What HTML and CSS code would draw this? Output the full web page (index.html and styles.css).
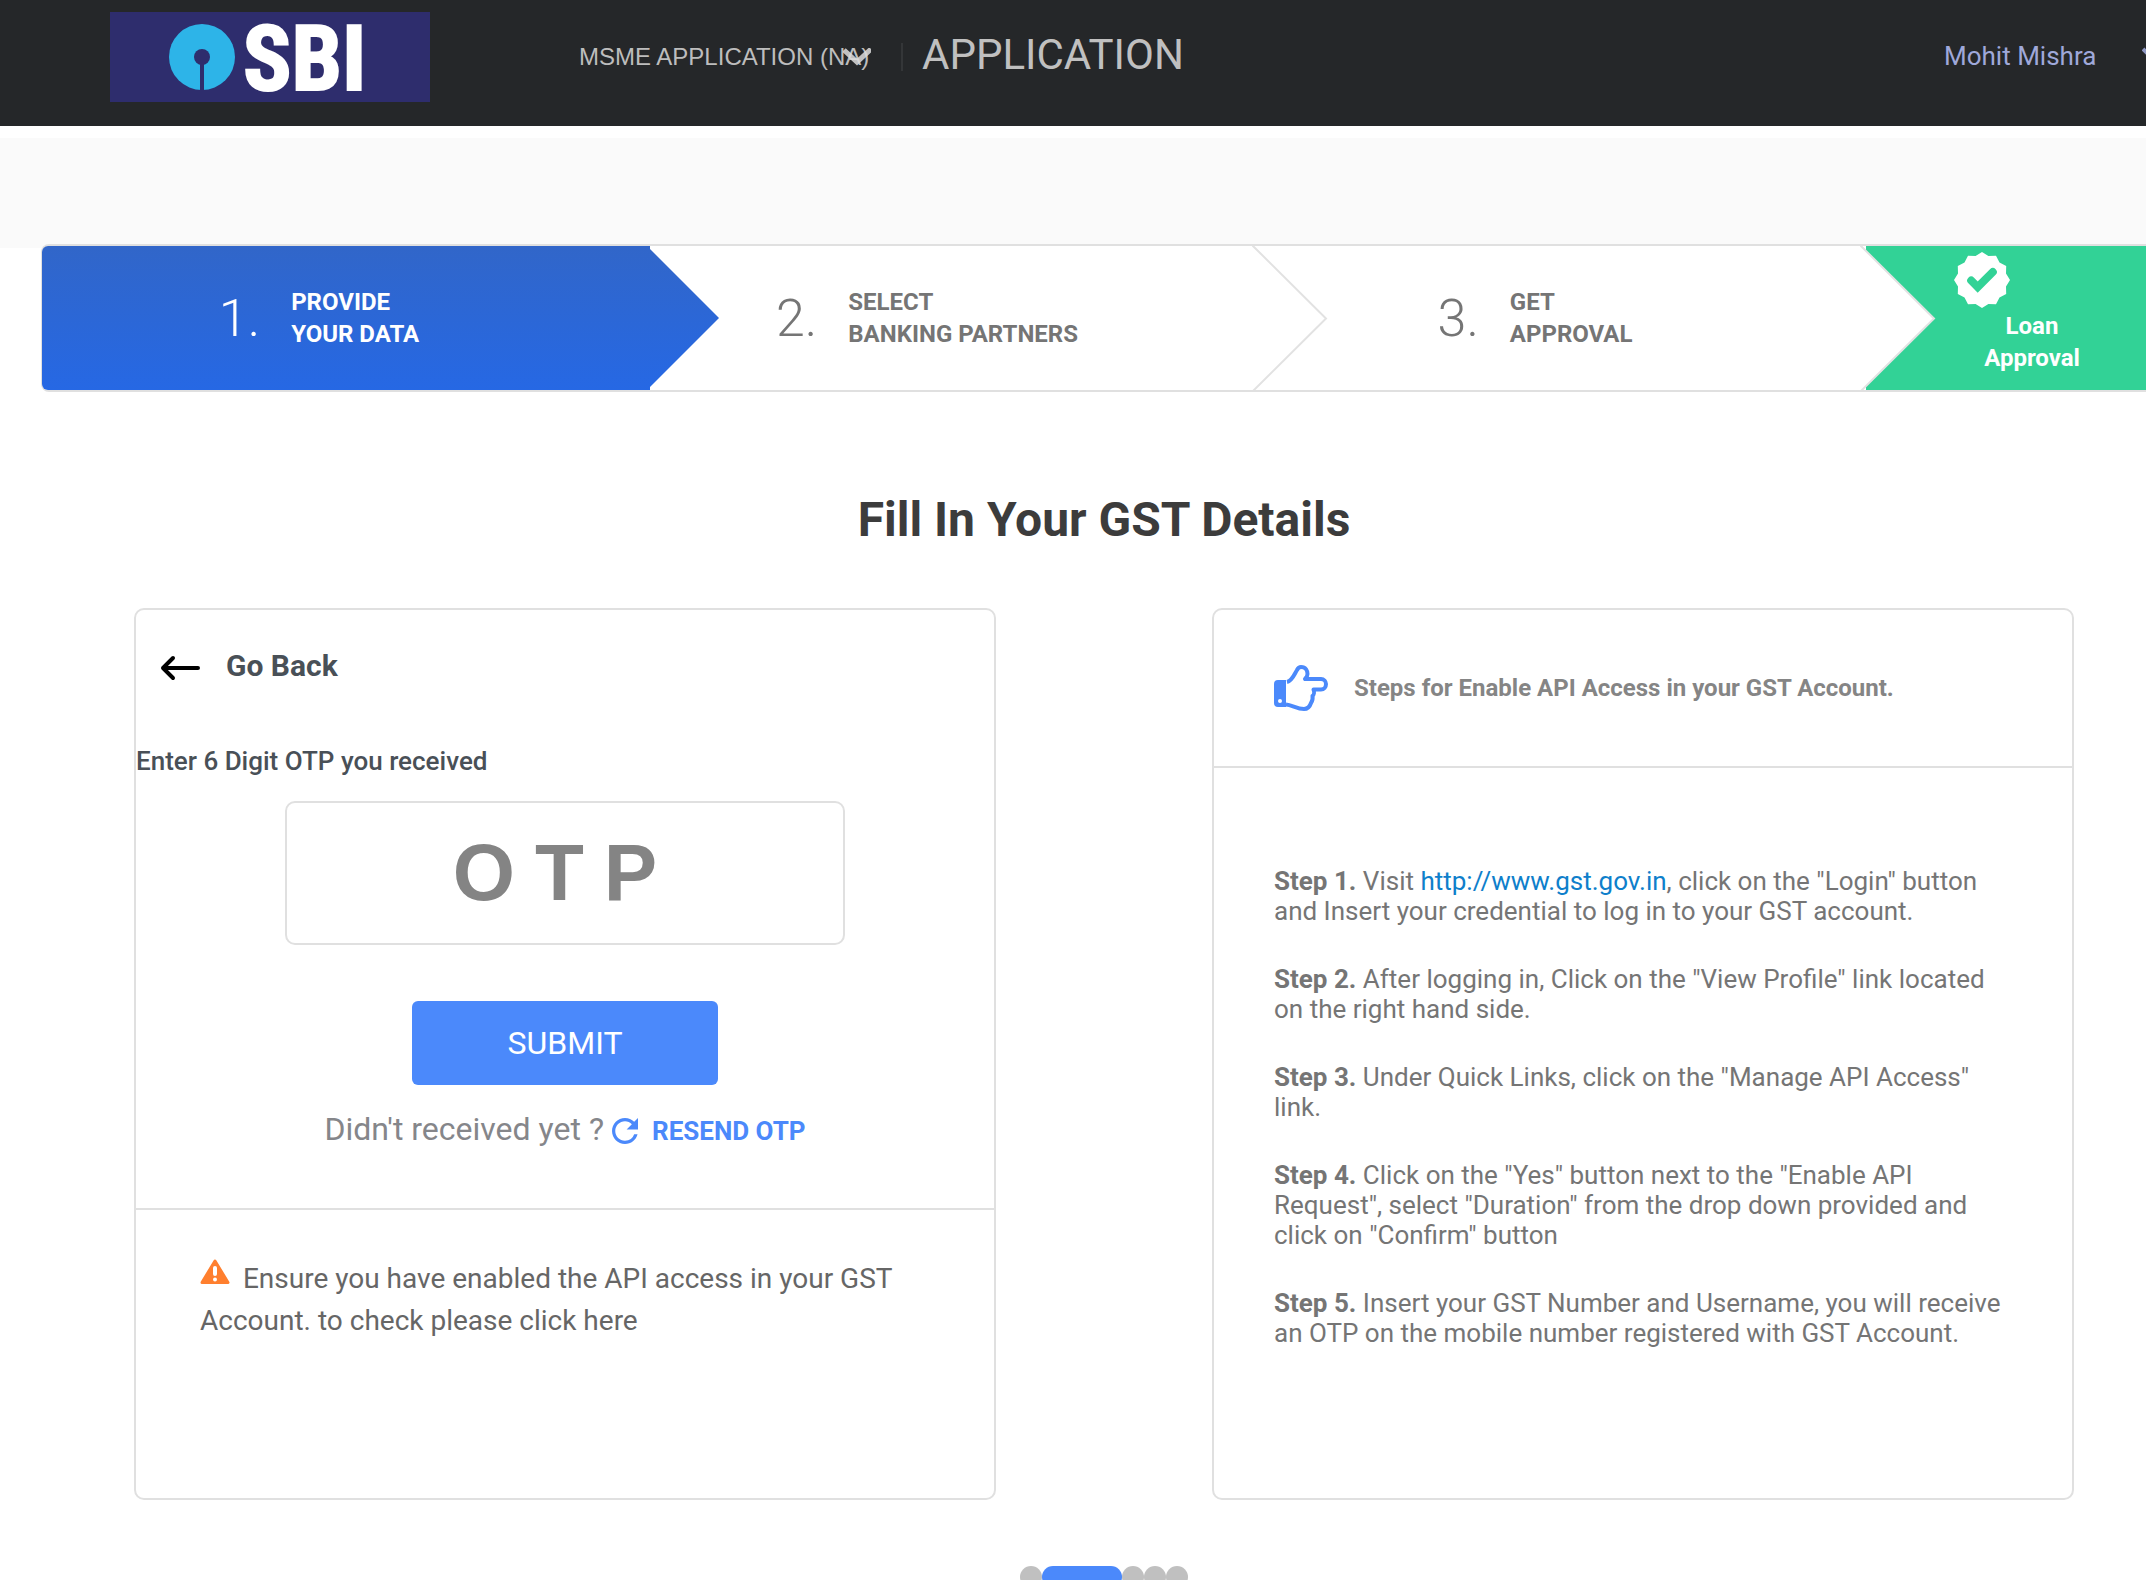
FILE: index.html
```html
<!DOCTYPE html>
<html lang="en">
<head>
<meta charset="utf-8">
<meta name="viewport" content="width=device-width, initial-scale=1">
<title>MSME Application - GST Details</title>
<link rel="stylesheet" href="styles.css">
</head>
<body>
<header class="topbar">
  <a class="logo" href="#" aria-label="SBI home">
    <svg width="320" height="90" viewBox="0 0 320 90">
      <rect width="320" height="90" fill="#2e2d6d"/>
      <circle cx="92" cy="45" r="33" fill="#2db4e8"/>
      <circle cx="92" cy="45" r="8" fill="#2e2d6d"/>
      <rect x="90" y="48" width="4" height="31" fill="#2e2d6d"/>
      <text class="logo-text" x="133" y="78">SBI</text>
    </svg>
  </a>
  <div class="product">
    <select class="product-select" aria-label="Application type">
      <option>MSME APPLICATION (NA)</option>
    </select>
    <svg class="product-chevron" width="28" height="18" viewBox="0 0 28 18"><path d="M1 2L14 14L28 1" fill="none" stroke="#dcdcdc" stroke-opacity=".85" stroke-width="5"/></svg>
  </div>
  <span class="topbar-title">APPLICATION</span>
  <button class="user" type="button">
    <span>Mohit Mishra</span>
    <svg width="28" height="18" viewBox="0 0 28 18"><path d="M1 2L14 15L27 2" fill="none" stroke="#8f98c4" stroke-width="4"/></svg>
  </button>
</header>
<div class="band"></div>

<ol class="stepper">
  <li class="step step-active">
    <span class="step-number">1.</span>
    <span class="step-label">PROVIDE<br>YOUR DATA</span>
  </li>
  <li class="step">
    <span class="step-number">2.</span>
    <span class="step-label">SELECT<br>BANKING PARTNERS</span>
    <svg class="step-arrow" width="76" height="144" viewBox="0 0 76 144"><path d="M0 -1L74 72.5L1 145" fill="#fff" stroke="#e2e2e2" stroke-width="2"/></svg>
  </li>
  <li class="step">
    <span class="step-number">3.</span>
    <span class="step-label">GET<br>APPROVAL</span>
    <svg class="step-arrow" width="76" height="144" viewBox="0 0 76 144"><path d="M0 -1L74 72.5L1 145" fill="#fff" stroke="#e2e2e2" stroke-width="2"/></svg>
  </li>
  <li class="step-final">
    <svg width="56" height="56" viewBox="-28 -28 56 56">
      <path fill="#fff" d="M0-28L6.4-24L14-24.2L17.5-17.5L24.2-14L24-6.4L28 0L24 6.4L24.2 14L17.5 17.5L14 24.2L6.4 24L0 28L-6.4 24L-14 24.2L-17.5 17.5L-24.2 14L-24 6.4L-28 0L-24-6.4L-24.2-14L-17.5-17.5L-14-24.2L-6.4-24Z"/>
      <path d="M-10.800 0.500L-4.300 7L10.800-8" fill="none" stroke="#32d296" stroke-width="8" stroke-linecap="round"/>
    </svg>
    <span class="step-label">Loan<br>Approval</span>
  </li>
</ol>

<main class="content">
  <h1 class="title">Fill In Your GST Details</h1>
  <div class="cards">
    <section class="card">
      <form class="otp">
        <a class="back" href="#">
          <svg width="40" height="30" viewBox="0 0 40 30"><path d="M38 17H3M13 7L3 17L13 27" fill="none" stroke="#000" stroke-width="4" stroke-linecap="round" stroke-linejoin="round"/></svg>
          <span>Go Back</span>
        </a>
        <label class="otp-label" for="otp">Enter 6 Digit OTP you received</label>
        <input class="otp-input" id="otp" type="text" maxlength="6" placeholder="OTP">
        <button class="submit" type="submit">SUBMIT</button>
        <p class="resend">
          <span>Didn't received yet ?</span>
          <a class="resend-link" href="#">
            <svg class="resend-icon" width="26" height="26" viewBox="4 4 16 16" fill="#4b89fb"><path d="M17.650 6.350A7.958 7.958 0 0 0 12 4c-4.420 0-7.990 3.580-7.990 8s3.570 8 7.990 8c3.730 0 6.840-2.550 7.730-6h-2.080A5.990 5.990 0 0 1 12 18c-3.310 0-6-2.690-6-6s2.690-6 6-6c1.660 0 3.140.690 4.220 1.780L13 11h7V4l-2.350 2.350z"/></svg>
            RESEND OTP
          </a>
        </p>
      </form>
      <p class="notice">
        <svg class="notice-icon" width="30" height="26" viewBox="0 0 30 26"><path d="M15 2L28 23.500H2Z" fill="#ff7f2e" stroke="#ff7f2e" stroke-width="3" stroke-linejoin="round"/><path d="M15 9V15" stroke="#fff" stroke-width="4" stroke-linecap="round"/><circle cx="15" cy="20.500" r="2" fill="#fff"/></svg>
        Ensure you have enabled the API access in your GST Account. to check please click here
      </p>
    </section>

    <section class="card">
      <h2 class="guide-head">
        <svg width="54" height="46" viewBox="0 0 54 46">
          <path d="M13 17C18 16 20 10 23 5C24 3 25 2 27 2C32 2 33.500 6 33.500 9C33.500 11 32 13 31 14H47C50 14 52 16.500 52 19C52 22 50 24.500 47 24.500H39.500C40.500 27 40 30 38.500 31C39 34 38.500 36 37 38C36 41 34 44 30 44C23 44 18 40 12 39.500" fill="none" stroke="#4b89fb" stroke-width="4" stroke-linejoin="round"/>
          <path fill="#4b89fb" fill-rule="evenodd" d="M4 15H12V42H4Q0 42 0 38V19Q0 15 4 15ZM6 34A2 2 0 0 0 6 38A2 2 0 0 0 6 34Z"/>
        </svg>
        <span>Steps for Enable API Access in your GST Account.</span>
      </h2>
      <div class="guide">
        <p><b>Step 1.</b> Visit <a href="http://www.gst.gov.in">http://www.gst.gov.in</a>, click on the "Login" button and Insert your credential to log in to your GST account.</p>
        <p><b>Step 2.</b> After logging in, Click on the "View Profile" link located on the right hand side.</p>
        <p><b>Step 3.</b> Under Quick Links, click on the "Manage API Access" link.</p>
        <p><b>Step 4.</b> Click on the "Yes" button next to the "Enable API Request", select "Duration" from the drop down provided and click on "Confirm" button</p>
        <p><b>Step 5.</b> Insert your GST Number and Username, you will receive an OTP on the mobile number registered with GST Account.</p>
      </div>
    </section>
  </div>
  <div class="dots">
    <span class="dot"></span><span class="dot dot-active"></span><span class="dot"></span><span class="dot"></span><span class="dot"></span>
  </div>
</main>
</body>
</html>
```
FILE: styles.css
```css
* {
  box-sizing: border-box;
}

html {
  height: 100vh;
  overflow: hidden;
}

body {
  margin: 0;
  height: 100vh;
  overflow: hidden;
  background: #fff;
  color: #757575;
  font-family: Roboto, "Liberation Sans", sans-serif;
  font-size: 26px;
}

p, h1, h2, ol {
  margin: 0;
  padding: 0;
}

a {
  color: inherit;
  text-decoration: none;
}

svg {
  display: block;
  flex: none;
}

button, input, select {
  font: inherit;
  border: 0;
  background: none;
  padding: 0;
}

/* Top bar */
.topbar {
  display: flex;
  align-items: center;
  height: 126px;
  padding: 0 0 12px 110px;
  background: #252729;
  overflow: hidden;
}

.logo-text {
  fill: #fff;
  stroke: #fff;
  stroke-width: 2px;
  font-family: "Liberation Sans Narrow", "Roboto Condensed", "Liberation Sans", sans-serif;
  font-size: 90px;
  font-weight: 700;
}

.product {
  display: grid;
  align-items: center;
  justify-items: end;
  margin-left: 149px;
  padding-right: 30px;
  border-right: 2px solid #343638;
}

.product-select,
.product-chevron {
  grid-area: 1 / 1;
}

.product-select {
  appearance: none;
  width: 292px;
  height: 28px;
  color: #bdbdbd;
  font-family: "Liberation Sans", sans-serif;
  font-size: 24px;
  line-height: 28px;
}

.product-chevron {
  pointer-events: none;
}

.topbar-title {
  margin-left: 19px;
  padding-bottom: 4px;
  color: #c0c0c0;
  font-size: 42px;
  line-height: 48px;
}

.user {
  display: flex;
  align-items: center;
  justify-content: space-between;
  flex: none;
  width: 226px;
  margin-left: auto;
  margin-right: -24px;
  padding-bottom: 2px;
  color: #9fa8da;
  font-size: 26px;
}

.band {
  height: 110px;
  margin-top: 12px;
  background: #fafafa;
}

/* Progress steps */
.stepper {
  display: grid;
  grid-template-columns: repeat(3, 608px) 1fr;
  margin: -4px 0 0 41px;
  border: 2px solid #e0e0e0;
  border-left-width: 1px;
  border-right: 0;
  border-radius: 8px 0 0 8px;
  background: #fff;
  list-style: none;
}

.step {
  position: relative;
  display: flex;
  align-items: center;
  justify-content: center;
  gap: 31px;
  height: 144px;
  padding-right: 54px;
}

.step-active {
  border-radius: 6px 0 0 6px;
  background: linear-gradient(#3166c9, #2668e4);
  color: #fff;
}

.step-active::after {
  content: "";
  position: absolute;
  top: 3px;
  left: 100%;
  width: 69px;
  height: 138px;
  background: linear-gradient(#3166c9, #2668e4);
  clip-path: polygon(0 0, 100% 50%, 0 100%);
}

.step-arrow {
  position: absolute;
  top: 0;
  right: -70px;
  z-index: 1;
}

.step-number {
  font-size: 52px;
  font-weight: 300;
}

.step-label {
  font-size: 24px;
  font-weight: 700;
  line-height: 32px;
}

.step-final {
  padding: 6px 36px 0 88px;
  background: #32d296;
  color: #fff;
}

.step-final .step-label {
  display: block;
  margin-top: 2px;
  text-align: center;
}

/* Content */
.content {
  padding: 100px 72px 0 134px;
}

.title {
  color: #3c3c3c;
  font-size: 48px;
  font-weight: 700;
  line-height: 56px;
  text-align: center;
}

.cards {
  display: grid;
  grid-template-columns: 1fr 1fr;
  gap: 216px;
  margin-top: 60px;
}

.card {
  min-height: 892px;
  border: 2px solid #e0e0e0;
  border-radius: 10px;
}

/* OTP form */
.otp {
  display: flex;
  flex-direction: column;
  align-items: center;
  padding: 36px 0 59px;
  border-bottom: 2px solid #e0e0e0;
}

.back {
  display: flex;
  align-items: center;
  align-self: flex-start;
  gap: 26px;
  padding-left: 24px;
  color: #495057;
  font-size: 30px;
  font-weight: 700;
  line-height: 40px;
}

.otp-label {
  align-self: flex-start;
  margin-top: 59px;
  color: #495057;
  font-weight: 500;
  line-height: 32px;
}

.otp-input {
  width: 560px;
  max-width: 100%;
  height: 144px;
  margin-top: 24px;
  border: 2px solid #e0e0e0;
  border-radius: 10px;
  font-family: "Liberation Sans", sans-serif;
  font-size: 80px;
  font-weight: 700;
  letter-spacing: 20px;
  text-align: center;
}

.otp-input::placeholder {
  color: #848484;
  opacity: 1;
}

.submit {
  width: 306px;
  height: 84px;
  margin-top: 56px;
  border-radius: 6px;
  background: #4b89fb;
  color: #fff;
  font-size: 32px;
}

.resend {
  display: flex;
  align-items: baseline;
  gap: 8px;
  margin-top: 24px;
  color: #85868a;
  font-size: 32px;
  line-height: 40px;
}

.resend-link {
  display: flex;
  align-items: baseline;
  gap: 14px;
  color: #4b89fb;
  font-size: 26px;
  font-weight: 700;
  line-height: 32px;
}

.resend-icon {
  align-self: center;
}

.notice {
  padding: 48px 64px;
  color: #666;
  font-size: 28px;
  line-height: 42px;
}

.notice-icon {
  display: inline-block;
  margin-right: 6px;
  vertical-align: 3px;
}

/* Guide */
.guide-head {
  display: flex;
  align-items: center;
  gap: 26px;
  height: 158px;
  padding: 0 60px;
  border-bottom: 2px solid #e0e0e0;
  color: #858585;
  font-size: 24px;
  font-weight: 700;
}

.guide {
  display: grid;
  gap: 38px;
  padding: 98px 60px 60px;
  line-height: 30px;
}

.guide a {
  color: #0f7fcb;
}

/* Pager */
.dots {
  display: flex;
  justify-content: center;
  margin-top: 66px;
}

.dot {
  width: 22px;
  height: 22px;
  border-radius: 11px;
  background: #c0c0c0;
}

.dot-active {
  width: 80px;
  background: #4b89fb;
}
```
